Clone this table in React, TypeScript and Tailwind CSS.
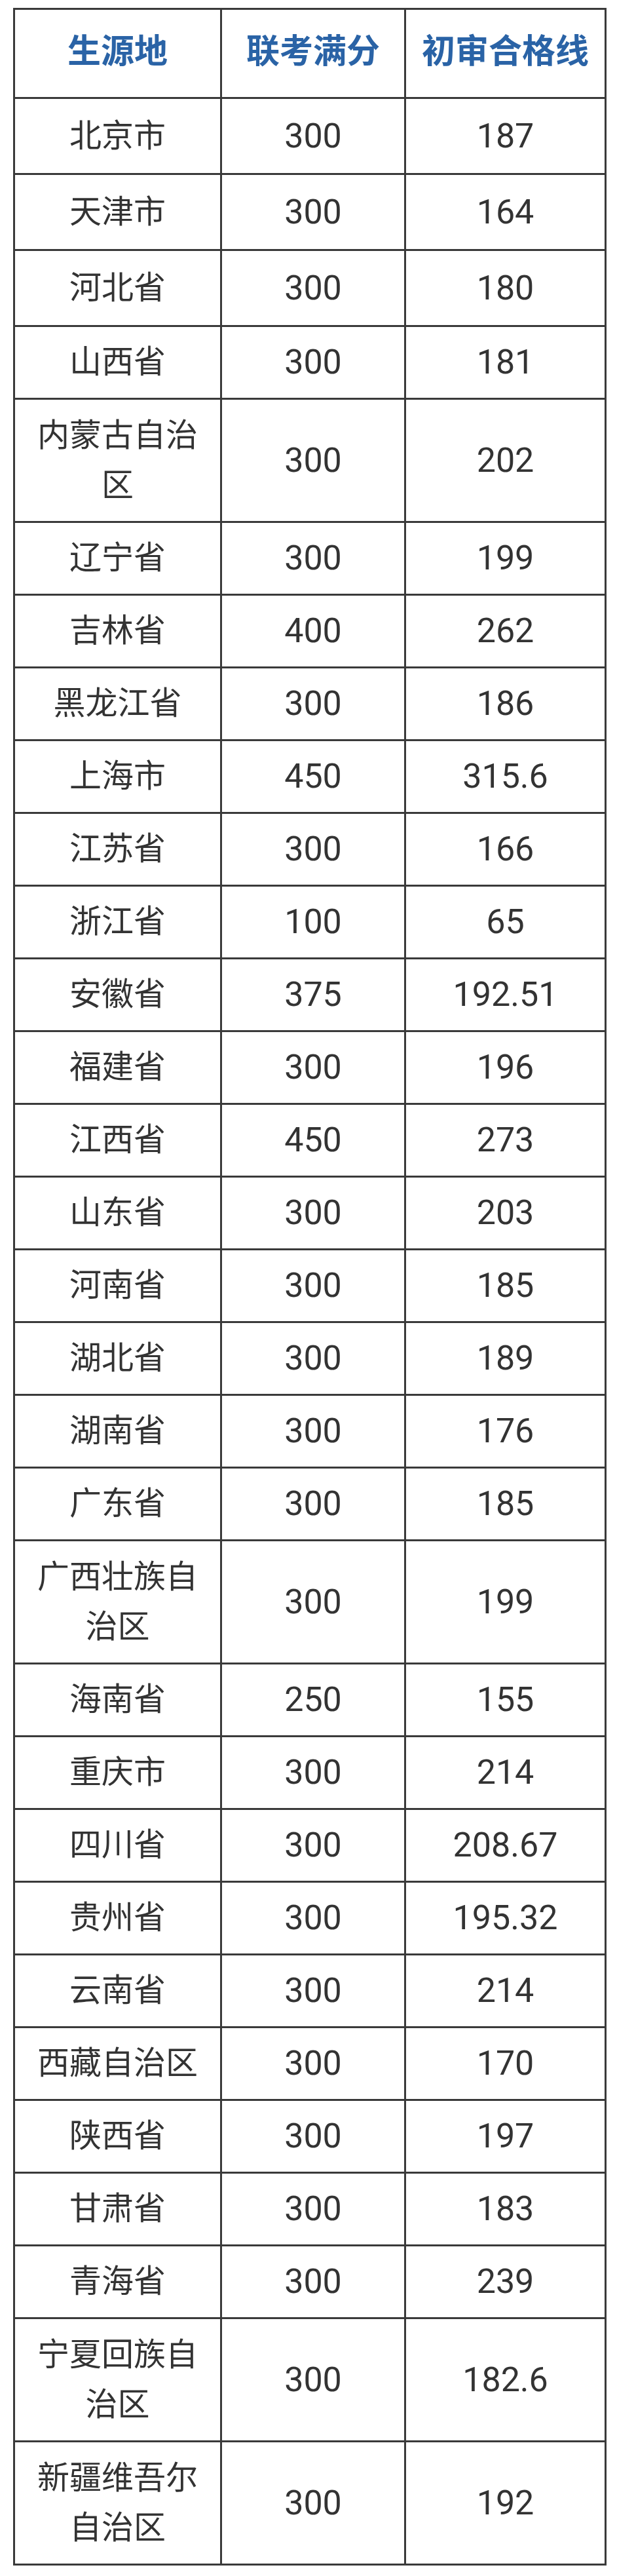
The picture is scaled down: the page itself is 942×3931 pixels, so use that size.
import React from "react";

type Row = { name: string; full: string; line: string; h: number };

const rows: Row[] = [
  { name: "北京市", full: "300", line: "187", h: 116 },
  { name: "天津市", full: "300", line: "164", h: 116 },
  { name: "河北省", full: "300", line: "180", h: 116 },
  { name: "山西省", full: "300", line: "181", h: 111 },
  { name: "内蒙古自治区", full: "300", line: "202", h: 188 },
  { name: "辽宁省", full: "300", line: "199", h: 111 },
  { name: "吉林省", full: "400", line: "262", h: 111 },
  { name: "黑龙江省", full: "300", line: "186", h: 111 },
  { name: "上海市", full: "450", line: "315.6", h: 111 },
  { name: "江苏省", full: "300", line: "166", h: 111 },
  { name: "浙江省", full: "100", line: "65", h: 111 },
  { name: "安徽省", full: "375", line: "192.51", h: 111 },
  { name: "福建省", full: "300", line: "196", h: 111 },
  { name: "江西省", full: "450", line: "273", h: 111 },
  { name: "山东省", full: "300", line: "203", h: 111 },
  { name: "河南省", full: "300", line: "185", h: 111 },
  { name: "湖北省", full: "300", line: "189", h: 111 },
  { name: "湖南省", full: "300", line: "176", h: 111 },
  { name: "广东省", full: "300", line: "185", h: 111 },
  { name: "广西壮族自治区", full: "300", line: "199", h: 188 },
  { name: "海南省", full: "250", line: "155", h: 111 },
  { name: "重庆市", full: "300", line: "214", h: 111 },
  { name: "四川省", full: "300", line: "208.67", h: 111 },
  { name: "贵州省", full: "300", line: "195.32", h: 111 },
  { name: "云南省", full: "300", line: "214", h: 111 },
  { name: "西藏自治区", full: "300", line: "170", h: 111 },
  { name: "陕西省", full: "300", line: "197", h: 111 },
  { name: "甘肃省", full: "300", line: "183", h: 111 },
  { name: "青海省", full: "300", line: "239", h: 111 },
  { name: "宁夏回族自治区", full: "300", line: "182.6", h: 188 },
  { name: "新疆维吾尔自治区", full: "300", line: "192", h: 188 },
];

const font = { fontFamily: "Roboto, 'Noto Sans CJK SC', sans-serif" };

export default function App() {
  return (
    <div className="bg-white w-[942px] h-[3931px] pt-[12px]" style={font}>
      <table className="ml-[20px] w-[903px] table-fixed border-collapse border-[3px] border-[#3a3a3a]">
        <colgroup>
          <col className="w-[316px]" />
          <col className="w-[281px]" />
          <col className="w-[306px]" />
        </colgroup>
        <thead>
          <tr className="h-[136px]">
            {["生源地", "联考满分", "初审合格线"].map((t) => (
              <th
                key={t}
                className="border-[3px] border-[#3a3a3a] px-0 pb-[6px] text-center align-middle text-[51px] font-bold leading-[60px] text-[#2a63a6]"
              >
                {t}
              </th>
            ))}
          </tr>
        </thead>
        <tbody>
          {rows.map((r) => (
            <tr key={r.name} style={{ height: r.h }}>
              <td className="border-[3px] border-[#3a3a3a] px-[30px] py-0 text-center align-middle text-[49px] leading-[76px] text-[#333333]">
                {r.name}
              </td>
              <td className="border-[3px] border-[#3a3a3a] px-0 py-0 text-center align-middle text-[52px] leading-[76px] text-[#333333]">
                {r.full}
              </td>
              <td className="border-[3px] border-[#3a3a3a] px-0 py-0 text-center align-middle text-[52px] leading-[76px] text-[#333333]">
                {r.line}
              </td>
            </tr>
          ))}
        </tbody>
      </table>
    </div>
  );
}
